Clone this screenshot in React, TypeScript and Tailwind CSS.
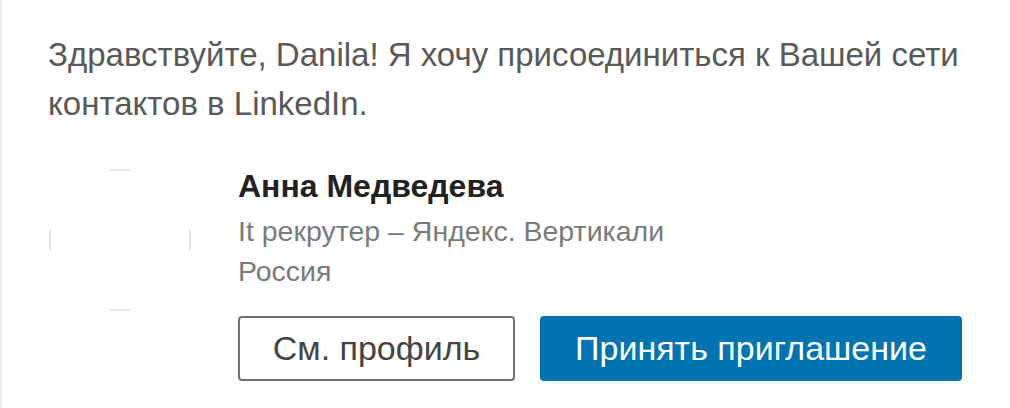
import React from 'react';

const font = { fontFamily: '"Liberation Sans", Arial, sans-serif' };

// faint avatar placeholder: only the tangent edges of the circle show
const AvatarPlaceholder = () => (
  <svg width="142" height="142" viewBox="0 0 142 142" className="shrink-0">
    <circle cx="71" cy="71" r="70" fill="none" stroke="#fcfcfc" strokeWidth="1" />
    <line x1="61" y1="1" x2="81" y2="1" stroke="#cfcfcf" strokeWidth="1" />
    <line x1="61" y1="141" x2="81" y2="141" stroke="#cfcfcf" strokeWidth="1" />
    <line x1="1" y1="61" x2="1" y2="81" stroke="#cfcfcf" strokeWidth="1" />
    <line x1="141" y1="61" x2="141" y2="81" stroke="#cfcfcf" strokeWidth="1" />
  </svg>
);

export default function App() {
  return (
    <div className="w-[1010px] h-[408px] bg-white flex border-l-2 border-[#ededed] overflow-hidden" style={font}>
      <div className="flex flex-col pl-[46px] pt-[30px]">
        <p className="text-[33px] leading-[49px] text-[#595959]">
          Здравствуйте, Danila! Я хочу присоединиться к Вашей сети
          <br />
          контактов в LinkedIn.
        </p>

        <div className="flex mt-[38px]">
          <div className="ml-[1px] mt-[3px]">
            <AvatarPlaceholder />
          </div>

          <div className="flex flex-col ml-[47px]">
            <div className="text-[32px] leading-[40px] font-bold text-[#222]">Анна Медведева</div>
            <div className="mt-[5px] text-[28.5px] leading-[40px] text-[#7a7a7a]">It рекрутер – Яндекс. Вертикали</div>
            <div className="text-[28.5px] leading-[40px] text-[#7a7a7a]">Россия</div>

            <div className="flex gap-[25px] mt-[25px]">
              <button className="w-[277px] h-[65px] rounded-[4px] border-2 border-[#707070] text-[34px] text-[#444] bg-white">
                См. профиль
              </button>
              <button className="w-[422px] h-[65px] rounded-[4px] bg-[#0073b1] text-[34px] text-white">
                Принять приглашение
              </button>
            </div>
          </div>
        </div>
      </div>
    </div>
  );
}
